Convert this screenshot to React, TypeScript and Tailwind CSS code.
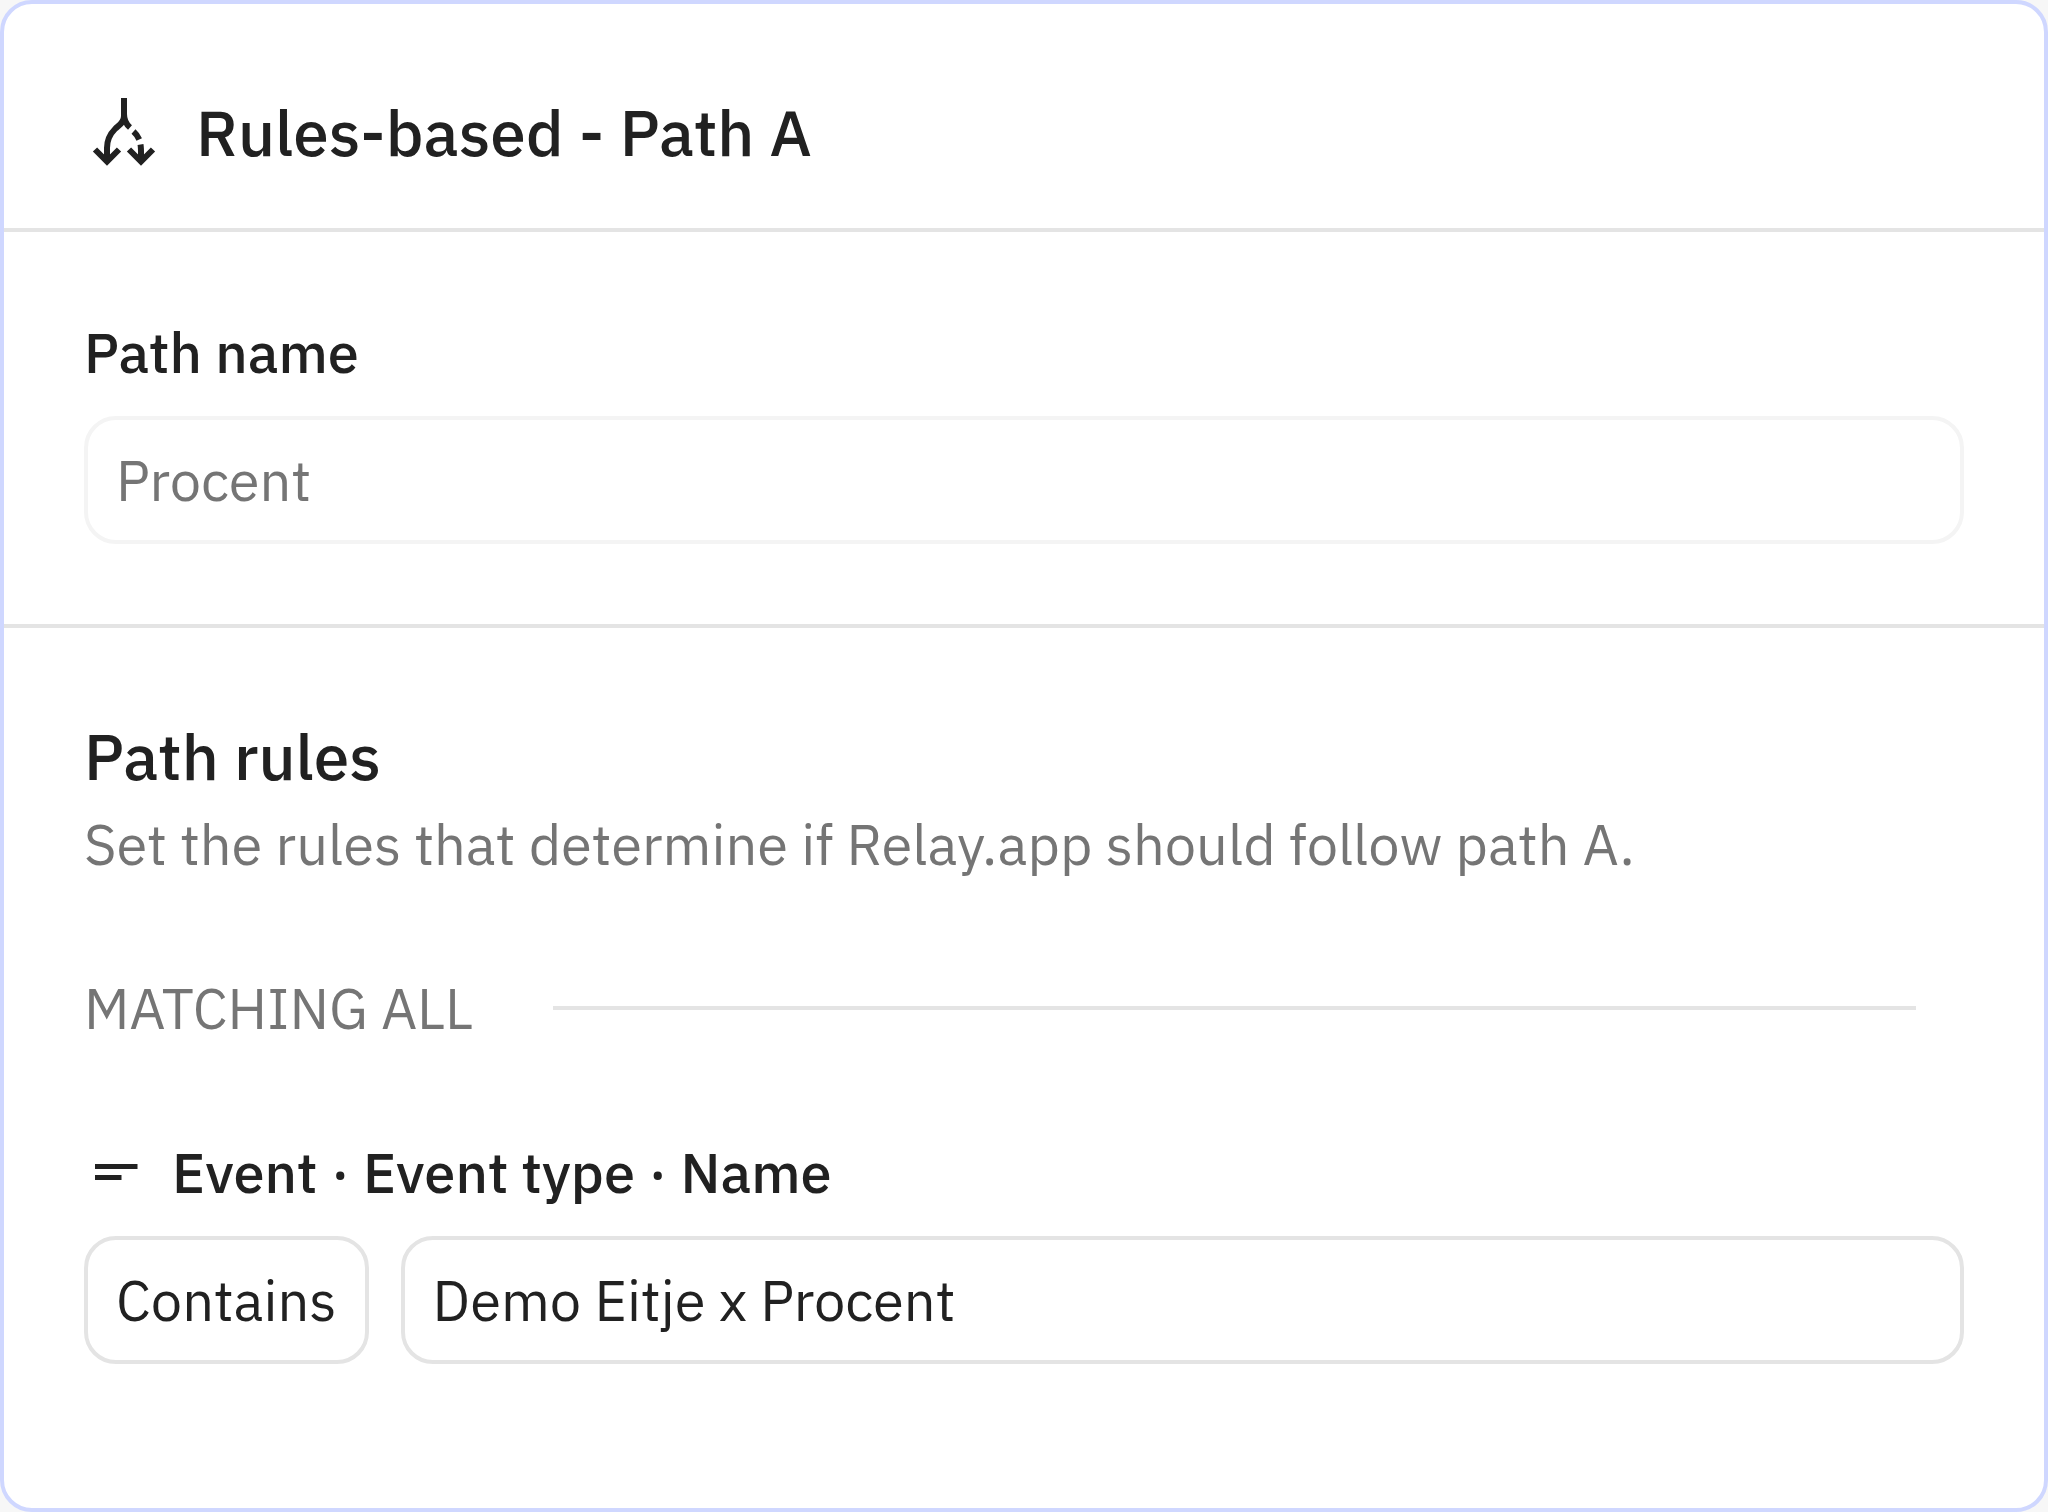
import React from "react";

function PathSplitIcon() {
  return (
    <svg className="size-20 shrink-0" viewBox="0 0 80 80" fill="none" stroke="currentColor" strokeWidth="6" aria-hidden="true">
      <path d="M40 6V24C40 31 35 33 31 37C26 42 23 47 23 56V68" />
      <path d="M40 22C40 29 42.500 32.500 46 35.500" />
      <path d="M49.500 39.500C52 41.700 53.700 44 55.200 47.500" />
      <path d="M56.500 52.500C57.200 56 57 60 57 68" />
      <path d="M11 57.500L23 69.500L35 57.500" />
      <path d="M45 57.500L57 69.500L69 57.500" />
    </svg>
  );
}

function TextIcon() {
  return (
    <svg className="h-[60px] w-[60px] shrink-0" viewBox="0 0 60 60" fill="currentColor" aria-hidden="true">
      <path d="M11 22H53.500V27H11ZM11 33H37.500V38H11Z" />
    </svg>
  );
}

export default function App() {
  return (
    <div className="min-h-screen bg-[#f7f7f7] font-['IBM_Plex_Sans','Roboto',sans-serif] text-[56px] leading-[80px] text-[#212121]">
      <main className="flex min-h-screen flex-col rounded-[32px] border-4 border-[#cfd7ff] bg-white">
        <header className="flex items-center gap-8 border-b-4 border-[#e4e4e4] px-20 pt-[88px] pb-14">
          <PathSplitIcon />
          <h1 className="text-[64px] font-medium">Rules-based - Path A</h1>
        </header>

        <section className="flex flex-col gap-6 border-b-4 border-[#e4e4e4] p-20">
          <label htmlFor="path-name" className="font-medium">
            Path name
          </label>
          <input
            id="path-name"
            type="text"
            defaultValue="Procent"
            className="h-32 w-full rounded-[32px] border-4 border-[#f4f4f4] bg-white px-7 text-[#757575]"
          />
        </section>

        <section className="flex flex-col gap-20 p-20">
          <div>
            <h2 className="text-[64px] leading-[96px] font-medium">Path rules</h2>
            <p className="text-[#757575]">Set the rules that determine if Relay.app should follow path A.</p>
          </div>

          <div className="flex items-center gap-20 pr-12 leading-[88px] text-[#757575]">
            <h3>MATCHING ALL</h3>
            <hr className="flex-1 border-t-4 border-[#e4e4e4]" />
          </div>

          <div className="flex flex-col gap-6">
            <label htmlFor="rule-value" className="flex items-center gap-7 font-medium">
              <TextIcon />
              Event · Event type · Name
            </label>
            <div className="flex gap-8">
              <button
                type="button"
                aria-haspopup="listbox"
                className="h-32 shrink-0 rounded-[32px] border-4 border-[#e4e4e4] bg-white px-7"
              >
                Contains
              </button>
              <input
                id="rule-value"
                type="text"
                defaultValue="Demo Eitje x Procent"
                className="h-32 min-w-0 flex-1 rounded-[32px] border-4 border-[#e4e4e4] bg-white px-7"
              />
            </div>
          </div>
        </section>
      </main>
    </div>
  );
}
